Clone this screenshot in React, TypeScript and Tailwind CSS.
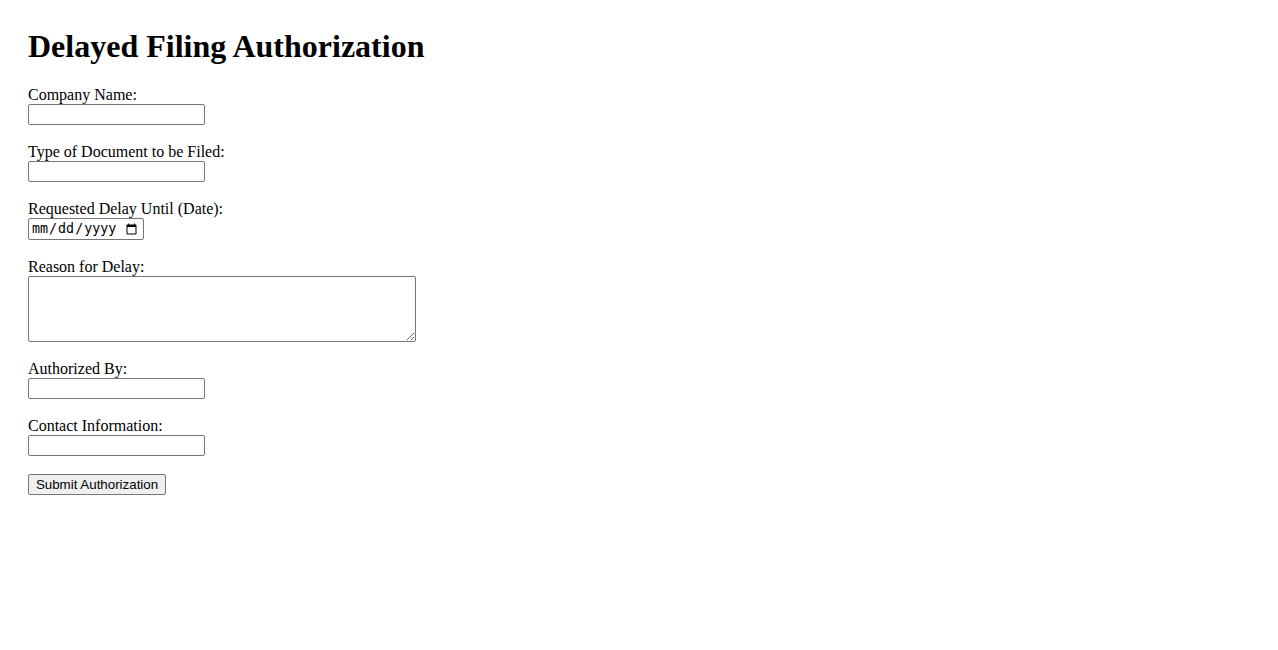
import React from "react";

function Field({ label, children, last }: { label: string; children: React.ReactNode; last?: boolean }) {
  return (
    <div className={last ? "" : "mb-[18px]"}>
      <label className="block leading-[18px] h-[18px]">{label}</label>
      {children}
    </div>
  );
}

const inputCls =
  "block w-[177px] h-[21px] border border-[#767676] rounded-[2px] bg-white px-[2px] text-[13.33px] font-['Liberation_Sans',Arial,sans-serif] text-black outline-none";

export default function App() {
  return (
    <div className="min-h-[650px] bg-white p-[28px] text-black text-[16px] font-['Liberation_Serif','Times_New_Roman',serif]">
      <h1 className="text-[32px] font-bold leading-[36.8px] mb-[21.44px]">Delayed Filing Authorization</h1>
      <form onSubmit={(e) => e.preventDefault()}>
        <Field label="Company Name:">
          <input type="text" className={inputCls} />
        </Field>
        <Field label="Type of Document to be Filed:">
          <input type="text" className={inputCls} />
        </Field>
        <Field label="Requested Delay Until (Date):">
          <input
            type="date"
            className="block w-[116px] h-[22px] border border-[#767676] rounded-[2px] bg-white pl-[2px] pr-[3px] text-[13.33px] font-['DejaVu_Sans_Mono',monospace] text-black outline-none"
          />
        </Field>
        <Field label="Reason for Delay:">
          <textarea className="block w-[388px] h-[66px] border border-[#767676] rounded-[2px] bg-white p-[2px] text-[13.33px] font-['DejaVu_Sans_Mono',monospace] outline-none resize" />
        </Field>
        <Field label="Authorized By:">
          <input type="text" className={inputCls} />
        </Field>
        <Field label="Contact Information:">
          <input type="text" className={inputCls} />
        </Field>
        <button
          type="submit"
          className="block h-[21px] w-[138px] border border-[#767676] rounded-[2px] bg-[#efefef] text-[13.33px] leading-[17px] font-['Liberation_Sans',Arial,sans-serif] text-black text-center"
        >
          Submit Authorization
        </button>
      </form>
    </div>
  );
}
